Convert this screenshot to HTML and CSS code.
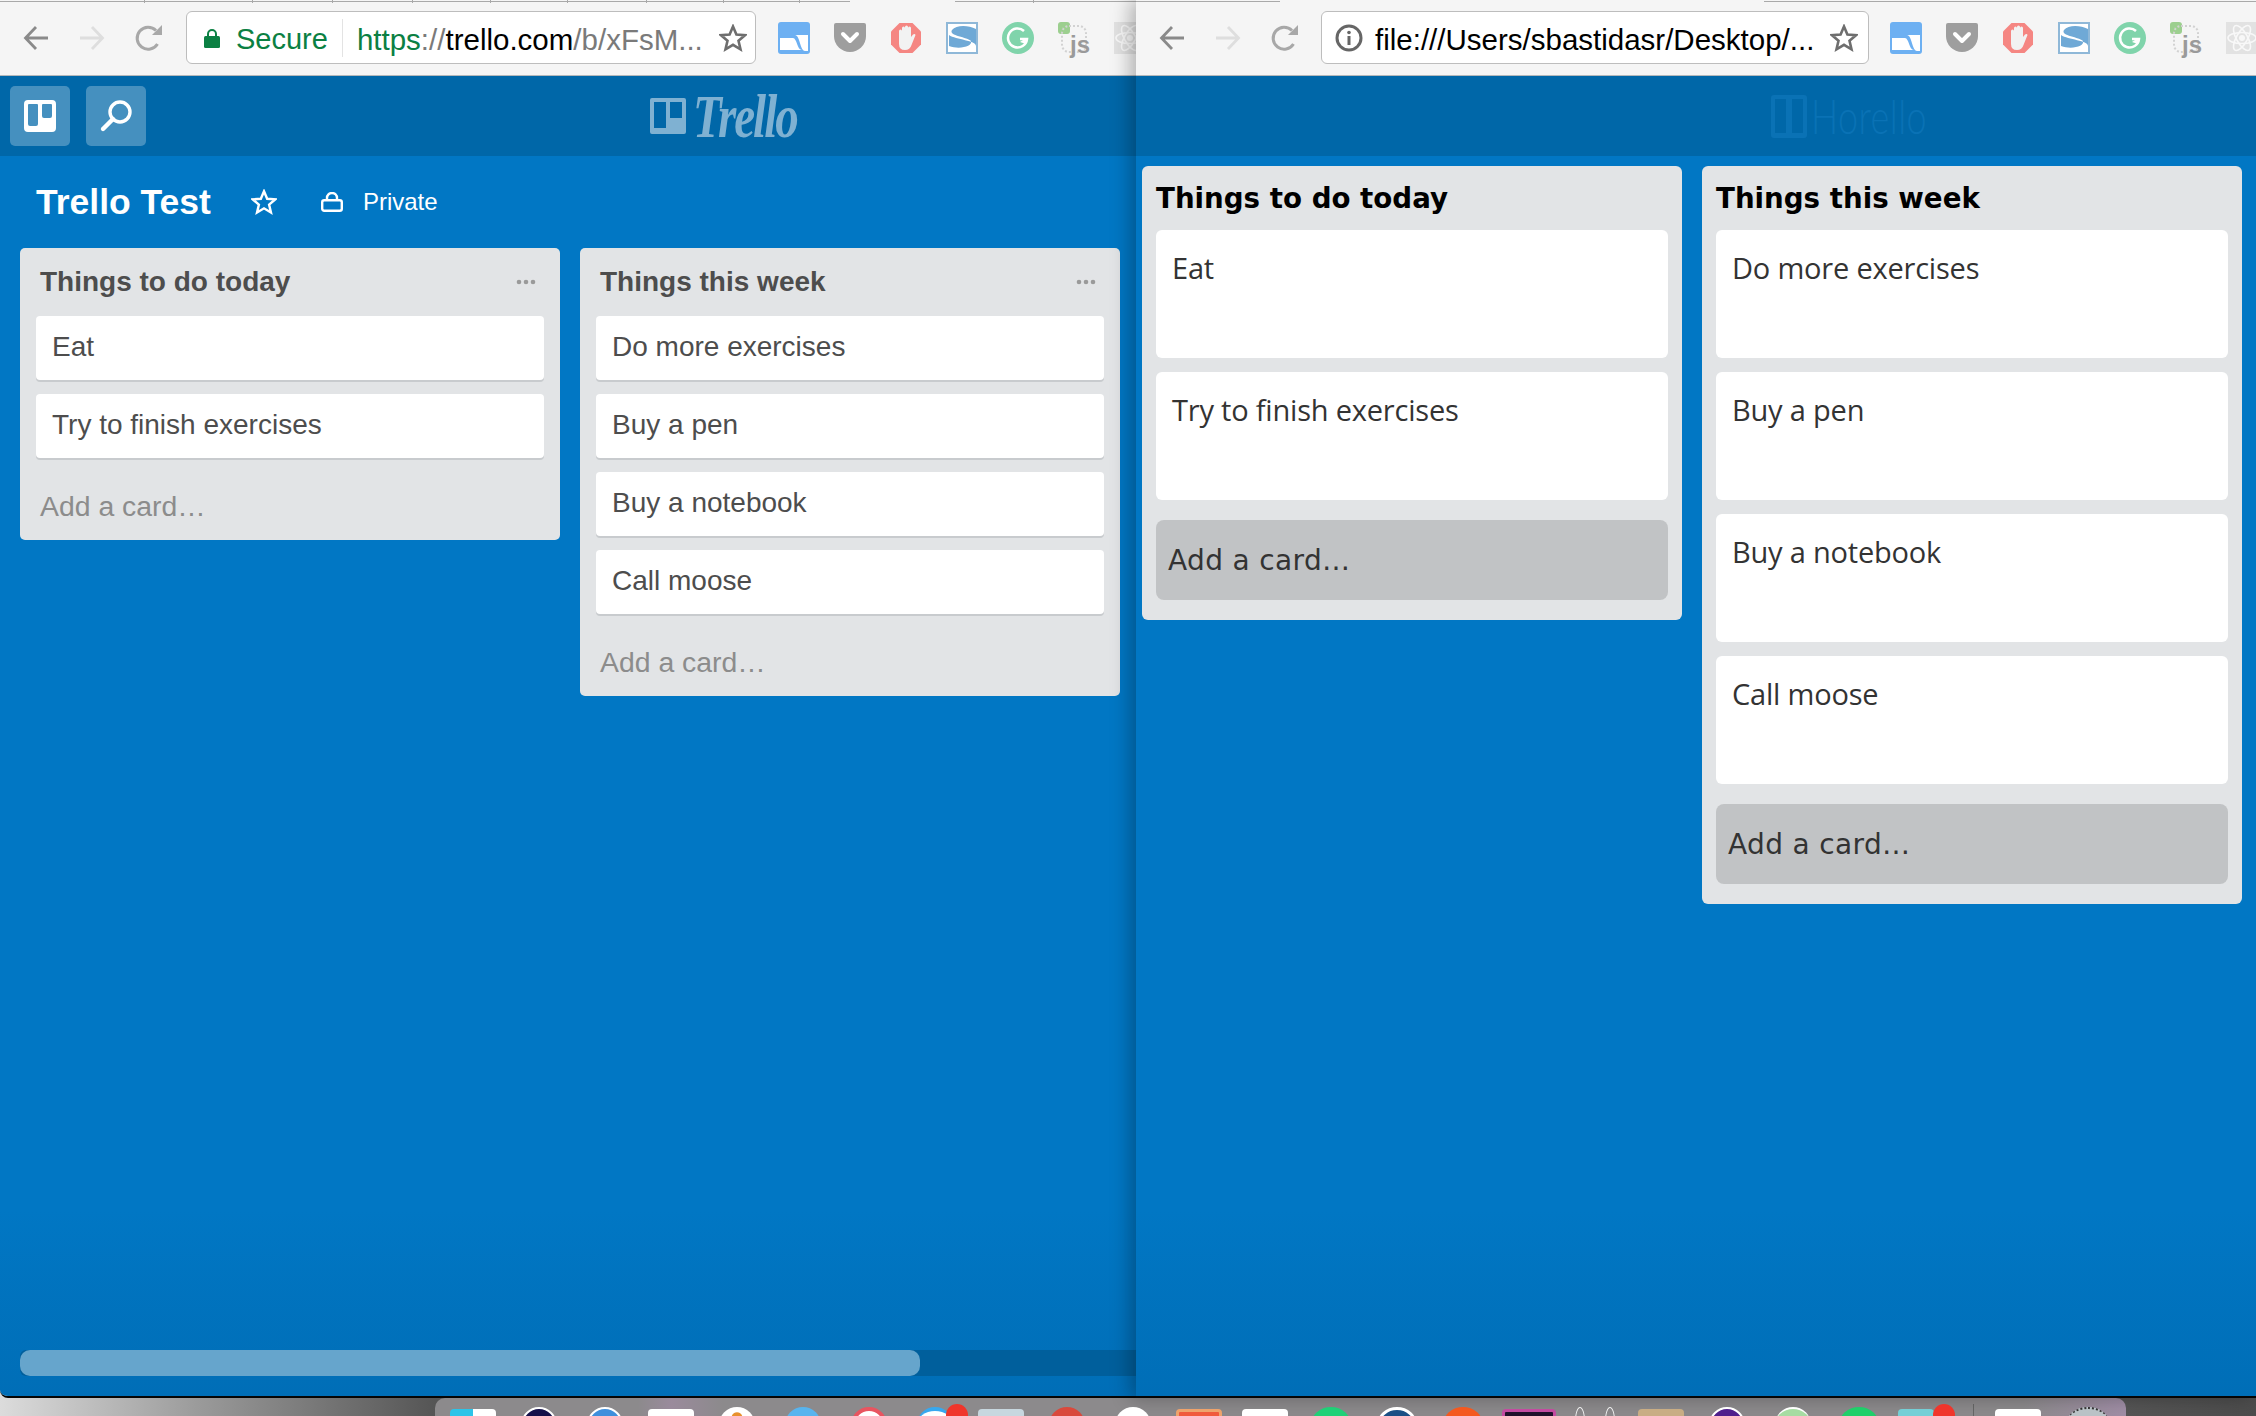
FILE: index.html
```html
<!DOCTYPE html>
<html lang="en">
<head>
    <meta charset="UTF-8">
    <title>Trello Test</title>
    <link rel="stylesheet" href="styles.css">
</head>
<body>
    <!-- icons shared by both browser windows -->
    <svg class="defs" width="0" height="0">
        <symbol id="i-arrow" viewBox="0 0 26 26"><path d="M25 13H3M13 2 2.500 13 13 24" fill="none" stroke="currentColor" stroke-width="2.800"/></symbol>
        <symbol id="i-reload" viewBox="0 0 28 28"><path d="M22.500 20A11 11 0 1 1 21 6.500" fill="none" stroke="currentColor" stroke-width="3"/><path d="M17 11 27 1V11Z" fill="currentColor"/></symbol>
        <symbol id="i-star" viewBox="0 0 28 28"><path d="M14 2.500 17.400 10.500 26 11.200 19.500 16.800 21.500 25.300 14 20.800 6.500 25.300 8.500 16.800 2 11.200 10.600 10.500Z" fill="none" stroke="currentColor" stroke-width="2.600"/></symbol>
        <symbol id="e-cal" viewBox="0 0 32 32"><rect width="32" height="32" rx="3" fill="#6db0f2"/><path d="M2 16H15C19 16 19 28 24 28H2Z" fill="#fff"/><path d="M17 13H30V29H27C22 29 22 13 17 13Z" fill="#fff"/></symbol>
        <symbol id="e-pocket" viewBox="0 0 32 32"><path d="M0 3Q0 1 2 1H30Q32 1 32 3V14A16 16 0 0 1 0 14Z" fill="#9e9e9e"/><path d="M9 12 16 19 23 12" fill="none" stroke="#fff" stroke-width="4" stroke-linecap="round" stroke-linejoin="round"/></symbol>
        <symbol id="e-block" viewBox="0 0 32 32"><path d="M9.500 1H22.500L31 9.500V22.500L22.500 31H9.500L1 22.500V9.500Z" fill="#f58682"/><path d="M9 14V9Q9 7.500 10.500 7.500T12 9V6Q12 4.500 13.500 4.500T15 6V5Q15 3.500 16.500 3.500T18 5V6Q18 4.500 19.500 4.500T21 6V15L23 12.500Q25 11.500 25.500 13L21.500 23Q20 28 15 28 9 28 9 22Z" fill="#f2f2f2"/></symbol>
        <symbol id="e-s" viewBox="0 0 32 32"><rect width="32" height="32" fill="#8fb8d8"/><rect x="2" y="2" width="28" height="28" fill="#fff"/><path d="M30 7C22 3 10 3 6 8 2 14 22 15 25 19 27 24 14 28 3 24V13C10 18 30 18 30 24Z" fill="#6fa9d6"/></symbol>
        <symbol id="e-g" viewBox="0 0 32 32"><circle cx="16" cy="16" r="16" fill="#80d4ab"/><path d="M22 9A9.500 9.500 0 1 0 25 17H18" fill="none" stroke="#fff" stroke-width="2.500"/><path d="M18 20 24 16V22Z" fill="#fff"/></symbol>
        <symbol id="e-react" viewBox="0 0 32 32"><rect width="32" height="32" fill="#e2e2e2"/><g fill="none" stroke="#f8f8f8" stroke-width="1.600"><ellipse cx="16" cy="16" rx="14" ry="5.500"/><ellipse cx="16" cy="16" rx="14" ry="5.500" transform="rotate(60 16 16)"/><ellipse cx="16" cy="16" rx="14" ry="5.500" transform="rotate(120 16 16)"/></g><circle cx="16" cy="16" r="3" fill="#f8f8f8"/></symbol>
    </svg>

    <div class="screen">
        <div class="windows">
            <!-- Trello window -->
            <section class="window window-left">
                <div class="tabs tabs-left"></div>
                <div class="toolbar">
                    <svg class="nav back"><use href="#i-arrow"/></svg>
                    <svg class="nav forward"><use href="#i-arrow"/></svg>
                    <svg class="nav reload"><use href="#i-reload"/></svg>
                    <div class="address address-left">
                        <svg class="lock" viewBox="0 0 16 20"><path d="M4 9V6A4 4 0 0 1 12 6V9" fill="none" stroke="#0b8043" stroke-width="2"/><rect y="8" width="16" height="12" rx="1.500" fill="#0b8043"/></svg>
                        <span class="secure">Secure</span>
                        <span class="sep"></span>
                        <span class="url"><span class="scheme">https</span><span class="dim">://</span>trello.com<span class="dim">/b/xFsM...</span></span>
                        <svg class="star"><use href="#i-star"/></svg>
                    </div>
                    <div class="extensions">
                        <svg class="ext"><use href="#e-cal"/></svg>
                        <svg class="ext"><use href="#e-pocket"/></svg>
                        <svg class="ext"><use href="#e-block"/></svg>
                        <svg class="ext"><use href="#e-s"/></svg>
                        <svg class="ext"><use href="#e-g"/></svg>
                        <div class="ext ext-js"><span class="js-dot"></span><span class="js-ring"></span><span class="js-text">js</span></div>
                        <svg class="ext"><use href="#e-react"/></svg>
                    </div>
                </div>
                <header class="header">
                    <button class="head-btn">
                        <svg width="32" height="32" viewBox="0 0 32 32"><path fill-rule="evenodd" d="M4 0H28Q32 0 32 4V28Q32 32 28 32H4Q0 32 0 28V4Q0 0 4 0ZM5 4Q4 4 4 5V24Q4 26 6 26H12Q14 26 14 24V5Q14 4 13 4ZM19 4Q18 4 18 5V16Q18 18 20 18H26Q28 18 28 16V5Q28 4 27 4Z" fill="#fff"/></svg>
                    </button>
                    <button class="head-btn">
                        <svg width="36" height="36" viewBox="0 0 36 36"><circle cx="22" cy="14" r="10" fill="none" stroke="#fff" stroke-width="3.400"/><path d="M15 21 5 31" stroke="#fff" stroke-width="4.400" stroke-linecap="round"/></svg>
                    </button>
                    <div class="logo logo-trello">
                        <svg width="36" height="36" viewBox="0 0 36 36"><path fill-rule="evenodd" d="M2 0H34Q36 0 36 2V34Q36 36 34 36H2Q0 36 0 34V2Q0 0 2 0ZM4 4V30H16V4ZM20 4V20H32V4Z" fill="#7fb1d2"/></svg>
                        <span class="logo-word">Trello</span>
                    </div>
                </header>
                <main class="board">
                    <div class="board-bar">
                        <h1 class="board-title">Trello Test</h1>
                        <svg class="board-star"><use href="#i-star"/></svg>
                        <svg class="board-lock" viewBox="0 0 22 20"><path d="M6 9V6A5 5 0 0 1 16 6V9" fill="none" stroke="#fff" stroke-width="2.400"/><rect x="1.200" y="8.200" width="19.600" height="10.600" rx="2" fill="none" stroke="#fff" stroke-width="2.400"/></svg>
                        <span class="board-private">Private</span>
                    </div>
                    <div class="lists">
                        <div class="list">
                            <div class="list-head">
                                <h2 class="list-title">Things to do today</h2>
                                <svg class="list-menu" viewBox="0 0 20 6"><circle cx="3" cy="3" r="2.300"/><circle cx="10" cy="3" r="2.300"/><circle cx="17" cy="3" r="2.300"/></svg>
                            </div>
                            <div class="card">Eat</div>
                            <div class="card">Try to finish exercises</div>
                            <div class="add-card">Add a card…</div>
                        </div>
                        <div class="list">
                            <div class="list-head">
                                <h2 class="list-title">Things this week</h2>
                                <svg class="list-menu" viewBox="0 0 20 6"><circle cx="3" cy="3" r="2.300"/><circle cx="10" cy="3" r="2.300"/><circle cx="17" cy="3" r="2.300"/></svg>
                            </div>
                            <div class="card">Do more exercises</div>
                            <div class="card">Buy a pen</div>
                            <div class="card">Buy a notebook</div>
                            <div class="card">Call moose</div>
                            <div class="add-card">Add a card…</div>
                        </div>
                    </div>
                    <div class="scrollbar"><div class="scroll-thumb"></div></div>
                </main>
            </section>

            <!-- Horello window -->
            <section class="window window-right">
                <div class="tabs tabs-right"></div>
                <div class="toolbar">
                    <svg class="nav back"><use href="#i-arrow"/></svg>
                    <svg class="nav forward"><use href="#i-arrow"/></svg>
                    <svg class="nav reload"><use href="#i-reload"/></svg>
                    <div class="address address-right">
                        <svg class="info" viewBox="0 0 28 28"><circle cx="14" cy="14" r="12" fill="none" stroke="#666" stroke-width="3"/><circle cx="14" cy="8.500" r="1.800" fill="#666"/><rect x="12.500" y="12" width="3" height="9" fill="#666"/></svg>
                        <span class="url">file:///Users/sbastidasr/Desktop/...</span>
                        <svg class="star"><use href="#i-star"/></svg>
                    </div>
                    <div class="extensions">
                        <svg class="ext"><use href="#e-cal"/></svg>
                        <svg class="ext"><use href="#e-pocket"/></svg>
                        <svg class="ext"><use href="#e-block"/></svg>
                        <svg class="ext"><use href="#e-s"/></svg>
                        <svg class="ext"><use href="#e-g"/></svg>
                        <div class="ext ext-js"><span class="js-dot"></span><span class="js-ring"></span><span class="js-text">js</span></div>
                        <svg class="ext"><use href="#e-react"/></svg>
                    </div>
                </div>
                <header class="header">
                    <div class="logo logo-horello">
                        <svg width="36" height="43" viewBox="0 0 36 43"><path fill-rule="evenodd" d="M3 0H33Q36 0 36 3V40Q36 43 33 43H3Q0 43 0 40V3Q0 0 3 0ZM4 4V38H15V4ZM21 4V38H32V4Z" fill="#0a72b5"/></svg>
                        <span class="logo-word">Horello</span>
                    </div>
                </header>
                <main class="board board-plain">
                    <div class="lists">
                        <div class="h-list">
                            <h2 class="h-title">Things to do today</h2>
                            <div class="h-card">Eat</div>
                            <div class="h-card">Try to finish exercises</div>
                            <div class="h-add">Add a card…</div>
                        </div>
                        <div class="h-list">
                            <h2 class="h-title">Things this week</h2>
                            <div class="h-card">Do more exercises</div>
                            <div class="h-card">Buy a pen</div>
                            <div class="h-card">Buy a notebook</div>
                            <div class="h-card">Call moose</div>
                            <div class="h-add">Add a card…</div>
                        </div>
                    </div>
                </main>
            </section>
        </div>

        <!-- bit of the desktop and the dock under the windows -->
        <footer class="desktop">
            <div class="dock">
                <span class="dock-cell"><i class="app square cyan"></i></span>
                <span class="dock-cell"><i class="app navy"></i></span>
                <span class="dock-cell"><i class="app blue"></i></span>
                <span class="dock-cell"><i class="app square white"></i></span>
                <span class="dock-cell"><i class="app white dot-orange"></i></span>
                <span class="dock-cell"><i class="app sky"></i></span>
                <span class="dock-cell"><i class="app red-ring"></i></span>
                <span class="dock-cell"><i class="app sky-ring"></i><b class="badge"></b></span>
                <span class="dock-cell"><i class="app square paper"></i></span>
                <span class="dock-cell"><i class="app red"></i></span>
                <span class="dock-cell"><i class="app white"></i></span>
                <span class="dock-cell"><i class="app square orange"></i></span>
                <span class="dock-cell"><i class="app square white"></i></span>
                <span class="dock-cell"><i class="app green-ring"></i></span>
                <span class="dock-cell"><i class="app navy-ring"></i></span>
                <span class="dock-cell"><i class="app flame"></i></span>
                <span class="dock-cell"><i class="app square pink"></i></span>
                <span class="dock-cell"><i class="app ears"></i></span>
                <span class="dock-cell"><i class="app square tan"></i></span>
                <span class="dock-cell"><i class="app purple"></i></span>
                <span class="dock-cell"><i class="app mint"></i></span>
                <span class="dock-cell"><i class="app green"></i></span>
                <span class="dock-cell dock-teal"><i class="app square teal"></i><b class="badge"></b></span>
                <span class="dock-sep"></span>
                <span class="dock-cell dock-last"><i class="app square white"></i></span>
                <span class="dock-cell dock-last"><i class="app mixed"></i></span>
            </div>
        </footer>
    </div>
</body>
</html>
```

FILE: styles.css
```css
/* page */
html, body { margin: 0; padding: 0; }
body { font-family: "Liberation Sans", Arial, sans-serif; color: #4d4d4d; background: #555; }
h1, h2 { margin: 0; }
.defs { position: absolute; }
.screen { width: 2256px; height: 1416px; display: flex; flex-direction: column; overflow: hidden; background: linear-gradient(90deg, #dcdcdc 0, #9a9a9a 200px, #555 435px, #555 2126px, #4c4c4c 100%); }
.windows { height: 1398px; display: flex; }

/* browser windows */
.window { height: 1396px; display: flex; flex-direction: column; overflow: hidden; border-bottom: 2px solid #050505; }
.window-left { width: 1136px; border-bottom-left-radius: 8px; }
.window-right { width: 1120px; position: relative; box-shadow: -6px 0 18px rgba(0, 0, 0, .28); }

/* tab strip: only the lower edge of the tabs shows */
.tabs { height: 3px; background-color: #f5f5f5; background-repeat: no-repeat; background-image: linear-gradient(#a9a9a9, #a9a9a9); }
.tabs-left { background-size: 850px 1px, 181px 1px, 1px 3px, 1px 3px, 1px 3px, 1px 3px, 1px 3px, 1px 3px, 1px 3px, 1px 3px, 1px 3px, 1px 3px;
    background-position: 0 1px, 955px 1px, 144px 0, 252px 0, 332px 0, 412px 0, 490px 0, 567px 0, 646px 0, 723px 0, 799px 0, 1033px 0;
    background-image: linear-gradient(#a9a9a9, #a9a9a9), linear-gradient(#a9a9a9, #a9a9a9), linear-gradient(#a9a9a9, #a9a9a9), linear-gradient(#a9a9a9, #a9a9a9), linear-gradient(#a9a9a9, #a9a9a9), linear-gradient(#a9a9a9, #a9a9a9), linear-gradient(#a9a9a9, #a9a9a9), linear-gradient(#a9a9a9, #a9a9a9), linear-gradient(#a9a9a9, #a9a9a9), linear-gradient(#a9a9a9, #a9a9a9), linear-gradient(#a9a9a9, #a9a9a9), linear-gradient(#a9a9a9, #a9a9a9); }
.tabs-right { background-size: 144px 1px, 492px 1px; background-position: 0 1px, 628px 1px;
    background-image: linear-gradient(#a9a9a9, #a9a9a9), linear-gradient(#a9a9a9, #a9a9a9); }

.toolbar { height: 69px; padding: 0 0 3px 23px; display: flex; align-items: center; background: #f5f5f5; border-bottom: 1px solid #b4b8bb; flex-shrink: 0; }
.nav { width: 26px; height: 26px; margin-right: 30px; flex-shrink: 0; }
.back { color: #8a8a8a; }
.forward { color: #dedede; transform: scaleX(-1); }
.reload { color: #a8a8a8; width: 28px; height: 28px; margin-right: 0; }

.address { height: 51px; display: flex; align-items: center; background: #fff; border: 1px solid #bdbdbd; border-radius: 6px; flex-shrink: 0; font-size: 29.500px; color: #000; white-space: nowrap; }
.address-left { width: 551px; margin-left: 23px; padding-left: 17px; }
.address-right { width: 533px; margin-left: 22px; padding-left: 13px; }
.lock { width: 16px; height: 20px; margin-right: 16px; }
.info { width: 28px; height: 28px; margin-right: 12px; }
.secure { font-size: 29px; color: #0b8043; padding-top: 4px; }
.url { padding-top: 4px; }
.sep { width: 1px; height: 38px; margin: 0 14px 0 14px; background: #e3e3e3; }
.scheme { color: #0b8043; }
.dim { color: #7a7a7a; }
.star { width: 28px; height: 28px; margin-left: auto; margin-right: 10px; color: #6e6e6e; }
.address-left .star { margin-right: 8px; }

.extensions { display: flex; gap: 24px; margin-left: 21px; flex-shrink: 0; }
.address-left + .extensions { margin-left: 22px; }
.ext { width: 32px; height: 32px; flex-shrink: 0; }
.ext-js { position: relative; }
.js-dot { position: absolute; left: 0; top: 0; width: 12px; height: 12px; border-radius: 3px; background: #9ccf8f; }
.js-ring { position: absolute; left: 3px; top: 3px; width: 22px; height: 24px; border: 2px dotted #d2d2d2; border-radius: 8px; }
.js-text { position: absolute; right: 0; bottom: -3px; font-size: 24px; line-height: 24px; color: #9a9a9a; font-weight: 700; }

/* blue header */
.header { height: 80px; display: flex; align-items: center; background: #0067a8; flex-shrink: 0; }
.head-btn { width: 60px; height: 60px; margin-left: 10px; margin-right: 6px; padding: 0; border: 0; border-radius: 5px; background: rgba(255, 255, 255, .27); display: flex; align-items: center; justify-content: center; }
.logo { display: flex; align-items: center; }
.logo-trello { margin-left: 498px; color: #7fb1d2; }
.logo-trello .logo-word { margin-left: 7px; font: italic 700 47px/47px "Liberation Serif", serif; letter-spacing: -2px; transform: scaleY(1.3); }
.logo-horello { margin-left: 635px; color: #0a72b5; }
.logo-horello .logo-word { margin-left: 4px; font: 300 36px/36px Lato, sans-serif; letter-spacing: .4px; transform: scaleY(1.3); }

/* board */
.board { flex: 1; display: flex; flex-direction: column; background: linear-gradient(#0177c4 0, #0177c4 85%, #006eb7 100%); min-height: 0; }
.board-plain { padding-top: 10px; }
.board-bar { height: 92px; padding-left: 36px; display: flex; align-items: center; flex-shrink: 0; color: #fff; }
.board-title { font-size: 35.500px; font-weight: 700; color: #fff; }
.board-star { width: 26px; height: 26px; margin-left: 40px; color: #fff; }
.board-lock { width: 22px; height: 20px; margin-left: 44px; }
.board-private { font-size: 24px; margin-left: 20px; }
.lists { flex: 1; display: flex; align-items: flex-start; min-height: 0; }
.window-left .lists { padding-left: 20px; gap: 20px; }
.window-right .lists { padding-left: 6px; gap: 20px; }

/* trello lists */
.list { width: 540px; border-radius: 5px; background: #e2e4e6; }
.list-head { height: 68px; padding: 0 24px 0 20px; display: flex; align-items: center; justify-content: space-between; }
.list-title { font-size: 28px; font-weight: 700; color: #4d4d4d; }
.list-menu { width: 20px; height: 6px; fill: #9a9a9a; }
.card { height: 62px; margin: 0 16px 14px; padding: 0 0 2px 16px; display: flex; align-items: center; background: #fff; border-radius: 4px; box-shadow: 0 2px 0 #c8cbce; font-size: 28px; color: #4d4d4d; }
.add-card { height: 67px; padding: 1px 0 0 20px; display: flex; align-items: center; font-size: 28.400px; color: #8c8c8c; }
.scrollbar { height: 26px; margin: 0 0 20px 20px; background: #005f9c; flex-shrink: 0; border-radius: 6px 0 0 6px; }
.scroll-thumb { width: 900px; height: 26px; border-radius: 10px; background: #66a5cc; }

/* horello lists */
.h-list { width: 512px; padding: 0 14px 20px; border-radius: 6px; background: #e2e4e6; }
.h-title { height: 64px; font: 700 27.700px/66px "DejaVu Sans", sans-serif; color: #000; }
.h-card { height: 97px; margin-bottom: 14px; padding: 15px 16px 16px; background: #fff; border-radius: 6px; font: 500 29px/46px "Open Sans", sans-serif; letter-spacing: -.2px; color: #333; }
.h-add { height: 80px; margin-top: 20px; padding-left: 12px; display: flex; align-items: center; background: #c1c3c5; border-radius: 8px; font: 400 28px "DejaVu Sans", sans-serif; letter-spacing: .35px; color: #333; }

/* desktop and dock */
.desktop { height: 18px; padding-left: 435px; display: flex; }
.dock { width: 1691px; height: 18px; padding-left: 5px; box-sizing: border-box; display: flex; overflow: hidden; background: linear-gradient(90deg, #8c8a8c 0, #8c8a8c 12%, #9a8a9c 14%, #8c8a8c 17%, #8c8a8c 94%, #a08ea6 100%); border-radius: 10px 10px 0 0; }
.dock-cell { width: 66px; height: 18px; position: relative; display: flex; justify-content: center; flex-shrink: 0; }
.dock-teal { margin-left: -9px; }
.dock-last { width: 70px; }
.dock-sep { width: 1px; height: 12px; margin: 6px 9px 0 24px; background: #666; flex-shrink: 0; }
.app { display: block; width: 36px; height: 36px; margin-top: 9px; border-radius: 50%; background: #fff; flex-shrink: 0; }
.app.square { width: 46px; margin-top: 11px; border-radius: 4px; }
.badge { position: absolute; left: 44px; top: 6px; width: 22px; height: 22px; border-radius: 50%; background: #f0352b; }
.dock-teal .badge { left: 50px; }
.cyan { background: linear-gradient(90deg, #2cc4e8 50%, #fff 50%) !important; }
.navy { background: #14104a; border: 2px solid #fff; box-sizing: border-box; }
.blue { background: #3f8fdc; border: 2px solid #fff; box-sizing: border-box; }
.white { background: #fff; }
.dot-orange { background: radial-gradient(circle at 50% 30%, #e8912d 0 5px, #fff 6px); }
.sky { background: #58b4ee; }
.red-ring { background: #fff; border: 4px solid #e85560; box-sizing: border-box; }
.sky-ring { background: #fff; border-top: 4px solid #37a8ef; box-sizing: border-box; }
.paper { background: #c7d7df !important; }
.red { background: #d9493c; }
.orange { background: #f05a3c !important; border: 3px solid #eea36c; box-sizing: border-box; }
.green-ring { width: 40px; background: #1fd077; }
.navy-ring { width: 40px; background: #1a4f85; border: 3px solid #fff; box-sizing: border-box; }
.flame { width: 40px; background: #f4591f; }
.pink { width: 54px !important; background: #20102a !important; border: 3px solid #c34aa0; box-sizing: border-box; }
.ears { width: 40px; display: flex; justify-content: space-between; background: transparent; }
.ears::before, .ears::after { content: ""; width: 8px; height: 26px; border: 1px solid #f2f2f2; border-radius: 50%; }
.tan { background: #c9ad84 !important; }
.purple { background: #4f1f8c; border: 2px solid #fff; box-sizing: border-box; }
.mint { background: #a6dca2; border-top: 2px solid #fff; box-sizing: border-box; }
.green { width: 40px; background: #1fcf6a; }
.teal { width: 36px !important; background: #75cfd6 !important; }
.mixed { width: 44px; background: #b9c2c6; border-top: 2px dotted #333; box-sizing: border-box; }
```
